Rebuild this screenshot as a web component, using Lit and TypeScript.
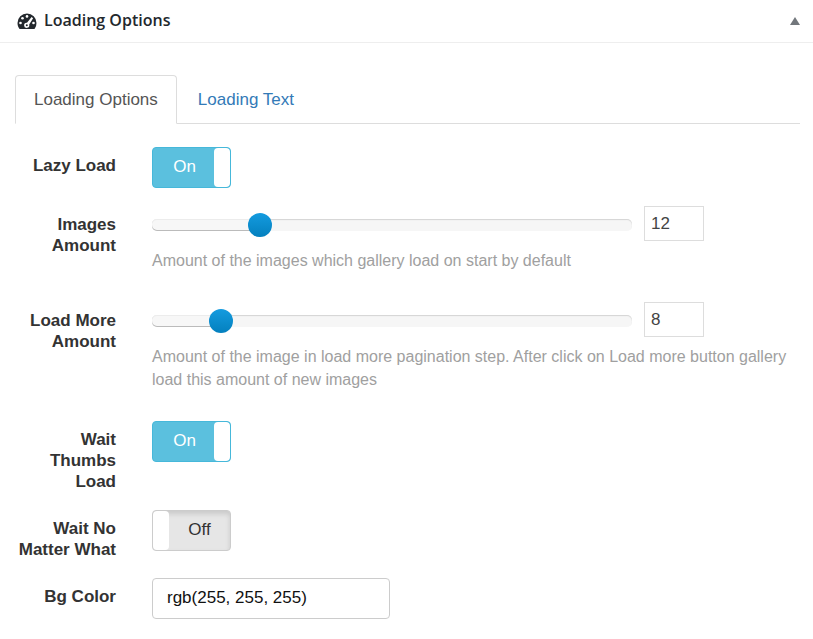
import { LitElement, html, css, nothing, type TemplateResult } from "lit";
import { customElement, state } from "lit/decorators.js";
import { classMap } from "lit/directives/class-map.js";
import { styleMap } from "lit/directives/style-map.js";

const MIN = 1;
const MAX = 50;

@customElement("app-root")
class AppRoot extends LitElement {
  @state() private switches: Record<string, boolean> = {
    lazy: true,
    thumbs: true,
    noMatter: false,
  };
  @state() private amounts: Record<string, number> = { images: 12, more: 8 };

  static styles = css`
    :host {
      display: block;
      background: #fff;
      color: #333;
      font: 17px/23px "Liberation Sans", Arial, sans-serif;
    }

    /* Panel header */
    .head {
      display: flex;
      align-items: center;
      height: 42px;
      padding: 0 13px 0 17px;
      border-bottom: 1px solid #eee;
    }
    .gauge { width: 20px; height: 18px; margin-right: 7px; }
    .title {
      flex: 1;
      margin: 0;
      padding-bottom: 2px;
      font: 600 16px/24px "Open Sans", "Noto Sans", sans-serif;
      color: #23282d;
    }
    .collapse {
      display: flex;
      padding: 0;
      border: 0;
      background: none;
      cursor: pointer;
    }
    .arrow { width: 10px; height: 8px; }

    /* Tabs */
    .body { padding: 32px 13px 19px 15px; }
    .tabs {
      display: flex;
      gap: 2px;
      border-bottom: 1px solid #ddd;
    }
    .tab {
      margin-bottom: -1px;
      padding: 12px 18px;
      border: 1px solid transparent;
      border-radius: 4px 4px 0 0;
      color: #337ab7;
      text-decoration: none;
    }
    .current {
      border-color: #ddd #ddd #fff;
      background: #fff;
      color: #555;
    }

    /* Option rows */
    .rows { display: grid; gap: 18px; padding-top: 23px; }
    .row {
      display: grid;
      grid-template-columns: 101px minmax(0, 1fr);
      column-gap: 36px;
      align-items: start;
    }
    .label {
      padding-top: 8px;
      text-align: right;
      font-weight: 700;
      line-height: 21px;
    }
    .help {
      margin: 8px 0 12px;
      font-size: 16px;
      color: #a0a0a0;
    }

    /* Switch */
    .switch {
      display: flex;
      box-sizing: border-box;
      position: relative;
      width: 79px;
      height: 41px;
      border: 1px solid #46b8da;
      border-radius: 4px;
      background: #5bc0de;
      color: #fff;
      overflow: hidden;
    }
    .text { flex: 1; padding-left: 2px; text-align: center; line-height: 37px; }
    .knob {
      width: 16px;
      background: #fff;
      border-radius: 4px;
    }
    .off {
      flex-direction: row-reverse;
      background: #e6e6e6;
      border-color: #ccc;
      color: #333;
      box-shadow: inset 0 3px 5px rgba(0, 0, 0, 0.125);
    }
    .off .text { padding: 0; }
    .box {
      position: absolute;
      inset: 0;
      width: 100%;
      height: 100%;
      margin: 0;
      opacity: 0;
      cursor: pointer;
    }

    /* Slider with its number box */
    .line { display: flex; align-items: center; gap: 12px; }
    .track {
      display: flex;
      align-items: center;
      position: relative;
      flex: 0 1 480px;
      min-width: 0;
      height: 12px;
      margin-top: 2px;
      border-radius: 5px;
      background: #f6f6f6;
      box-shadow: inset 0 1px 1px #d4d4d4;
    }
    .fill {
      height: 12px;
      border-radius: 5px 0 0 5px;
      background: #f7f7f7;
      box-shadow: inset 0 1px 0 #ececec, inset 0 -1px 0 #bbb;
    }
    .range {
      appearance: none;
      position: absolute;
      left: -12px;
      width: calc(100% + 24px);
      height: 24px;
      margin: 0;
      background: transparent;
    }
    .range::-webkit-slider-thumb {
      appearance: none;
      width: 24px;
      height: 24px;
      border-radius: 50%;
      background: linear-gradient(#149bdf, #0480be);
    }
    .number {
      box-sizing: border-box;
      width: 60px;
      height: 35px;
      margin: 0;
      padding: 0 6px;
      border: 1px solid #ddd;
      background: #fff;
      color: #444;
      font: inherit;
    }

    .color {
      display: block;
      box-sizing: border-box;
      width: 238px;
      height: 41px;
      margin: 0;
      padding: 0 14px 2px;
      border: 1px solid #ccc;
      border-radius: 4px;
      background: #fff;
      color: #111;
      font: inherit;
    }
  `;

  private row(id: string, label: string, control: TemplateResult, help = "") {
    return html`<div class="row">
      <label class="label" for=${id}>${label}</label>
      <div>
        ${control}
        ${help ? html`<p class="help">${help}</p>` : nothing}
      </div>
    </div>`;
  }

  private toggle(id: string) {
    const on = this.switches[id];
    return html`<div class=${classMap({ switch: true, off: !on })}>
      <span class="text" aria-hidden="true">${on ? "On" : "Off"}</span>
      <span class="knob"></span>
      <input class="box" id=${id} type="checkbox" .checked=${on}
        @change=${() => { this.switches = { ...this.switches, [id]: !on }; }}>
    </div>`;
  }

  private slider(id: string, name: string) {
    const value = this.amounts[id];
    const width = `${((value - MIN) / (MAX - MIN)) * 100}%`;
    const update = (e: Event) => {
      const next = Number((e.target as HTMLInputElement).value) || MIN;
      this.amounts = { ...this.amounts, [id]: Math.min(MAX, Math.max(MIN, next)) };
    };
    return html`<div class="line">
      <div class="track">
        <div class="fill" style=${styleMap({ width })}></div>
        <input class="range" id=${id} type="range" min=${MIN} max=${MAX}
          .value=${String(value)} @input=${update}>
      </div>
      <input class="number" type="text" aria-label="${name} value"
        .value=${String(value)} @change=${update}>
    </div>`;
  }

  render() {
    return html`
      <header class="head">
        <svg class="gauge" viewBox="0 0 20 18" aria-hidden="true">
          <path fill="#23282d" d="M10 1.5a9.5 9.5 0 0 0-9.5 9.5c0 2 .6 3.9 1.7 5.5.3.4.6.5 1 .5h13.6c.4 0 .7-.1 1-.5a9.6 9.6 0 0 0 1.7-5.5A9.5 9.5 0 0 0 10 1.5z"/>
          <g fill="#fff">
            <circle cx="10" cy="4.4" r="1.3"/>
            <circle cx="5.5" cy="6.3" r="1.3"/>
            <circle cx="3.5" cy="11" r="1.3"/>
            <circle cx="16.5" cy="11" r="1.3"/>
            <path d="M14.6 5l1.5 1.2-3.9 6.4a2.6 2.6 0 1 1-2.2-1.9z"/>
          </g>
          <circle cx="9.8" cy="13.3" r="1" fill="#23282d"/>
        </svg>
        <h2 class="title">Loading Options</h2>
        <button class="collapse" type="button" aria-label="Collapse panel">
          <svg class="arrow" viewBox="0 0 10 8" aria-hidden="true"><path fill="#72777c" d="M5 0l5 8H0z"/></svg>
        </button>
      </header>
      <main class="body">
        <nav class="tabs">
          <a class="tab current" href="#options" aria-current="page">Loading Options</a>
          <a class="tab" href="#text">Loading Text</a>
        </nav>
        <div class="rows">
          ${this.row("lazy", "Lazy Load", this.toggle("lazy"))}
          ${this.row("images", "Images Amount", this.slider("images", "Images Amount"),
            "Amount of the images which gallery load on start by default")}
          ${this.row("more", "Load More Amount", this.slider("more", "Load More Amount"),
            "Amount of the image in load more pagination step. After click on Load more button gallery load this amount of new images")}
          ${this.row("thumbs", "Wait Thumbs Load", this.toggle("thumbs"))}
          ${this.row("noMatter", "Wait No Matter What", this.toggle("noMatter"))}
          ${this.row("bg", "Bg Color", html`<input class="color" id="bg" type="text" value="rgb(255, 255, 255)">`)}
        </div>
      </main>`;
  }
}
